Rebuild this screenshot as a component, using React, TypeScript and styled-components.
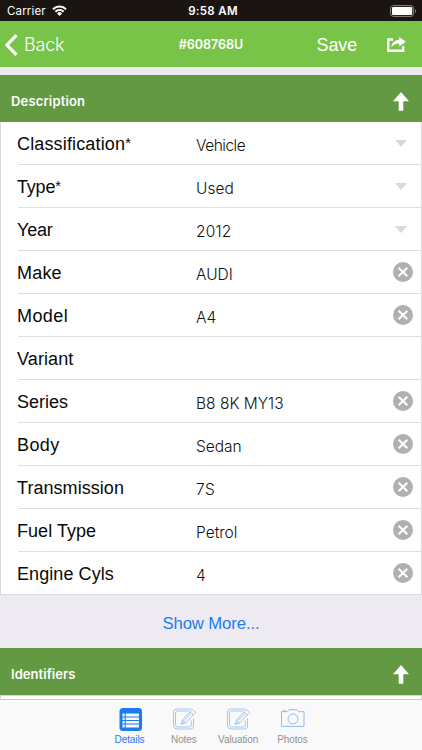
import React from "react";
import styled, { createGlobalStyle } from "styled-components";

const Global = createGlobalStyle`
  * { box-sizing: border-box; }
  body { margin: 0; background: #edebf1; font-family: "Liberation Sans", Arial, sans-serif; }
`;

const Screen = styled.div`
  width: 422px;
  height: 750px;
  display: flex;
  flex-direction: column;
  overflow: hidden;
  background: #edebf1;
`;

const StatusBar = styled.header`
  height: 21px;
  flex: none;
  display: grid;
  grid-template-columns: 1fr auto 1fr;
  align-items: center;
  padding: 1px 5px 0 7px;
  background: #1a1512;
  color: #fff;
  font: 400 11.5px/20px Inter, sans-serif;
`;
const Carrier = styled.div`
  display: flex;
  align-items: center;
  gap: 6px;
  letter-spacing: 0.16px;
  svg { margin-bottom: 2px; }
`;
const Clock = styled.div`
  font-weight: 600;
  letter-spacing: 0.3px;
  padding-left: 2px;
`;
const BatterySlot = styled.div`
  display: flex;
  justify-content: flex-end;
  padding-bottom: 1px;
`;

const NavBar = styled.nav`
  height: 46px;
  flex: none;
  display: grid;
  grid-template-columns: 1fr auto 1fr;
  align-items: center;
  padding: 0 16px 0 5px;
  background: #77c449;
  color: #fff;
`;
const BackButton = styled.div`
  display: flex;
  align-items: center;
  gap: 6px;
  font: 300 18px/46px Inter, sans-serif;
  letter-spacing: -0.2px;
`;
const BackLabel = styled.span`
  padding-top: 1px;
`;
const NavTitle = styled.div`
  font: 600 12.5px/44px Inter, sans-serif;
  padding: 1px 0 0 11px;
`;
const NavActions = styled.div`
  display: flex;
  align-items: center;
  justify-content: flex-end;
  gap: 30px;
  font-size: 18px;
`;
const SaveLabel = styled.span`
  padding-top: 1px;
  letter-spacing: -0.15px;
`;

const SectionBar = styled.div`
  height: 47px;
  flex: none;
  display: flex;
  align-items: center;
  justify-content: space-between;
  padding: 5px 13px 0 11px;
  background: #629942;
  color: #fff;
  font: 600 13px/40px Inter, sans-serif;
`;
const SectionTitle = styled.span<{ $track: number }>`
  letter-spacing: ${(p) => p.$track}px;
  padding-bottom: 1px;
`;
const Gap = styled.div`
  height: 8px;
  flex: none;
`;

const FieldList = styled.div`
  flex: none;
  background: #fff;
  border-left: 1px solid #d9d9db;
  border-right: 1px solid #d9d9db;
  border-bottom: 1px solid #dcdbe0;
`;
const FieldRow = styled.div<{ $last: boolean }>`
  height: ${(p) => (p.$last ? 42 : 43)}px;
  margin-left: 17px;
  display: grid;
  grid-template-columns: 178px 1fr 20px;
  align-items: center;
  padding-right: 8px;
  border-bottom: ${(p) => (p.$last ? "0" : "1px solid #dedee1")};
`;
const Label = styled.span<{ $track: number }>`
  font-size: 18px;
  line-height: 20px;
  padding-top: 2px;
  margin-left: -1px;
  color: #0a0a0a;
  white-space: nowrap;
  letter-spacing: ${(p) => p.$track}px;
`;
const Star = styled.span`
  font-size: 14.5px;
  line-height: 0;
  vertical-align: 2px;
  letter-spacing: 0;
`;
const Value = styled.span<{ $track: number }>`
  font: 300 15.5px/20px Inter, sans-serif;
  padding-top: 5px;
  color: #111;
  white-space: nowrap;
  letter-spacing: ${(p) => p.$track}px;
`;
const Accessory = styled.span`
  display: flex;
  justify-content: center;
`;
const Triangle = styled.span`
  width: 0;
  height: 0;
  margin: 1px 5px 0 0;
  border: 6.5px solid transparent;
  border-top: 7.5px solid #d9d9d9;
  border-bottom: 0;
`;

const ShowMore = styled.div`
  height: 53px;
  flex: none;
  text-align: center;
  font-size: 16.7px;
  line-height: 58px;
  letter-spacing: -0.1px;
  color: #1b7cf2;
`;
const NextList = styled.div`
  height: 4px;
  flex: none;
  background: #fff;
  border: 1px solid #d9d9db;
  border-bottom: 0;
`;
const TabBar = styled.footer`
  height: 52px;
  flex: none;
  display: flex;
  justify-content: center;
  border-top: 1px solid #c9c9ca;
  background: #f9f9f9;
`;
const Tab = styled.div<{ $active?: boolean }>`
  width: 54.3px;
  display: flex;
  flex-direction: column;
  align-items: center;
  padding-top: 8px;
  gap: 2px;
  font-size: 10px;
  line-height: 13px;
  letter-spacing: -0.1px;
  color: ${(p) => (p.$active ? "#1b7cf2" : "#929292")};
`;

const Wifi = () => (
  <svg width="15" height="11" viewBox="0 0 15 11" fill="none" stroke="#fff" strokeWidth="2">
    <path d="M1 4.2a9.2 9.2 0 0 1 13 0M3.4 6.8a5.8 5.8 0 0 1 8.2 0" />
    <path d="M5 8.4a3.5 3.5 0 0 1 5 0L7.5 11z" fill="#fff" stroke="none" />
  </svg>
);
const Battery = () => (
  <svg width="27" height="12" viewBox="0 0 27 12">
    <rect x=".6" y=".6" width="23" height="10.8" rx="2.8" fill="none" stroke="#8a8785" />
    <rect x="2" y="2" width="20.2" height="8" rx="1.3" fill="#fff" />
    <path d="M25 4v4c1.3-.5 1.3-3.5 0-4z" fill="#8a8785" />
  </svg>
);
const Chevron = () => (
  <svg width="13" height="22" viewBox="0 0 13 22" fill="none" stroke="#fff" strokeWidth="3.2">
    <path d="M11.5 1.2 2 11l9.5 9.8" />
  </svg>
);
const Share = () => (
  <svg width="19" height="15" viewBox="0 0 19 15">
    <path d="M6 2.5H1.2v11.2h15V9.2" fill="none" stroke="#fff" strokeWidth="2.4" />
    <path d="M12.3 0 18.8 4.7l-6.5 4.8V6.6C8.7 6.6 6.3 7.6 4.2 10.6 4.7 6 7.5 3 12.3 2.7z" fill="#fff" />
  </svg>
);
const UpArrow = () => (
  <svg width="16" height="19" viewBox="0 0 16 19">
    <path d="M8 0 16 9.2H10.3V18.7H5.7V9.2H0z" fill="#fff" />
  </svg>
);
const Clear = () => (
  <svg width="20" height="20" viewBox="0 0 20 20">
    <circle cx="10" cy="10" r="10" fill="#b0b0b0" />
    <path d="m5.7 5.7 8.6 8.6m0-8.6-8.6 8.6" stroke="#fff" strokeWidth="2.1" />
  </svg>
);
const DetailsIcon = () => (
  <svg width="24" height="23" viewBox="0 0 24 23">
    <rect x="1.5" width="22.5" height="23" rx="3.5" fill="#1b7cf2" />
    <path d="M4.500 5.500H21v14H4.500z" fill="#f9f9f9" />
    <path d="M4 9h17.500M4 12.500h17.500M4 16h17.500M7.200 5v15" stroke="#1b7cf2" strokeWidth="1.1" />
  </svg>
);
const NoteIcon = () => (
  <svg width="24" height="23" viewBox="0 0 24 23" fill="none" stroke="#8dbbf2" strokeWidth=".8">
    <path d="M21.500 10.500V18a3 3 0 0 1-3 3h-13.500a3.500 3.500 0 0 1-3.500-3.500V4A3 3 0 0 1 4.500 1h15" />
    <path d="M19.300 12.500V17a2 2 0 0 1-2 2H5.500a2 2 0 0 1-2-2V5a2 2 0 0 1 2-2h11.500" />
    <path d="m20.300 1.500 3.300 2.800-10 10.700-4.500 1.200L10.500 12zM18 4l3.200 2.900M10.500 12l3.100 3M9.300 16l2.500-2.500M12.300 12.500l6.500-7" />
  </svg>
);
const CameraIcon = () => (
  <svg width="25" height="23" viewBox="0 0 25 23" fill="none" stroke="#8dbbf2">
    <path d="M1.500 3.700h6l1.800-2h7.500l1.800 2h5.400v14.700H1.500z" />
    <circle cx="13" cy="10.900" r="5" />
    <path d="M3 3.500v-.8h2.200v.8" />
  </svg>
);

type Field = { label: string; required?: boolean; value: string; kind?: "select" | "clear"; lt?: number; vt?: number };
const fields: Field[] = [
  { label: "Classification", required: true, value: "Vehicle", kind: "select", lt: 0.15, vt: -0.5 },
  { label: "Type", required: true, value: "Used", kind: "select", lt: -0.2 },
  { label: "Year", value: "2012", kind: "select", lt: -0.2, vt: 0.2 },
  { label: "Make", value: "AUDI", kind: "clear", lt: 0.2 },
  { label: "Model", value: "A4", kind: "clear", lt: 0.4 },
  { label: "Variant", value: "", lt: 0.1 },
  { label: "Series", value: "B8 8K MY13", kind: "clear", lt: 0 },
  { label: "Body", value: "Sedan", kind: "clear", lt: 0.4 },
  { label: "Transmission", value: "7S", kind: "clear", lt: 0.05, vt: 0.3 },
  { label: "Fuel Type", value: "Petrol", kind: "clear", lt: 0.05 },
  { label: "Engine Cyls", value: "4", kind: "clear", lt: 0.08 },
];

export default function App() {
  return (
    <Screen>
      <Global />
      <StatusBar>
        <Carrier>Carrier <Wifi /></Carrier>
        <Clock>9:58 AM</Clock>
        <BatterySlot><Battery /></BatterySlot>
      </StatusBar>
      <NavBar>
        <BackButton><Chevron /><BackLabel>Back</BackLabel></BackButton>
        <NavTitle>#608768U</NavTitle>
        <NavActions><SaveLabel>Save</SaveLabel><Share /></NavActions>
      </NavBar>
      <Gap />
      <SectionBar><SectionTitle $track={0.15}>Description</SectionTitle><UpArrow /></SectionBar>
      <FieldList>
        {fields.map((f, i) => (
          <FieldRow key={f.label} $last={i === fields.length - 1}>
            <Label $track={f.lt ?? 0}>{f.label}{f.required && <Star>*</Star>}</Label>
            <Value $track={f.vt ?? 0}>{f.value}</Value>
            <Accessory>
              {f.kind === "select" && <Triangle />}
              {f.kind === "clear" && <Clear />}
            </Accessory>
          </FieldRow>
        ))}
      </FieldList>
      <ShowMore>Show More...</ShowMore>
      <SectionBar><SectionTitle $track={0.05}>Identifiers</SectionTitle><UpArrow /></SectionBar>
      <NextList />
      <TabBar>
        <Tab $active><DetailsIcon />Details</Tab>
        <Tab><NoteIcon />Notes</Tab>
        <Tab><NoteIcon />Valuation</Tab>
        <Tab><CameraIcon />Photos</Tab>
      </TabBar>
    </Screen>
  );
}
